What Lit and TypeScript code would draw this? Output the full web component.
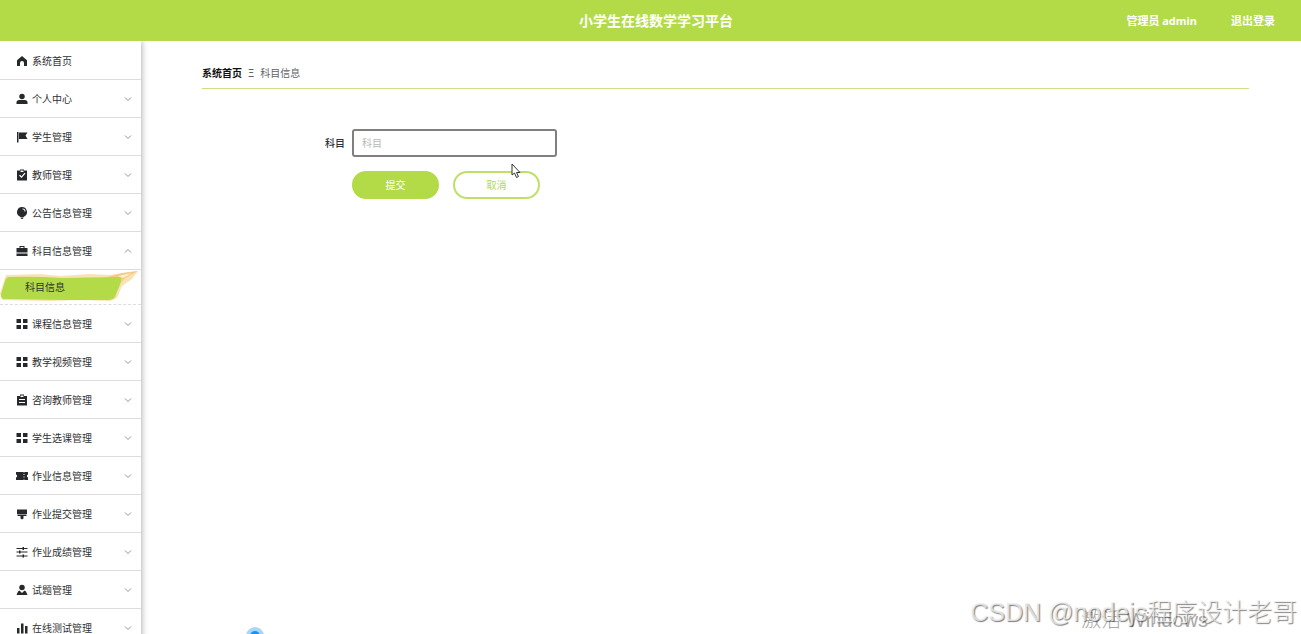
import { LitElement, html, css, svg, nothing } from 'lit';
import { customElement, property } from 'lit/decorators.js';

// Menu glyphs, drawn on a 24 x 24 grid.
const icons: Record<string, unknown> = {
  home: svg`<path d="M12 2 22 10.500V22h-6v-6a4 4 0 0 0-8 0v6H2V10.500z"/>`,
  user: svg`<circle cx="12" cy="7" r="5.500"/><path d="M1 22v-3c0-3 2-5 5-5h12c3 0 5 2 5 5v3z"/>`,
  flag: svg`<path d="M2 2h3v21H2zM6 3h17l-4 6 4 7H6z"/>`,
  claim: svg`<path fill-rule="evenodd" d="M2 3h6V1h8v2h6v20H2zM9 3v3h6V3zM6 13l5 5 8-9-2-1.500-6 7-3-3z"/>`,
  bulb: svg`<path fill-rule="evenodd" d="M12 0a10 10 0 0 1 6 18l-3 2H9l-3-2A10 10 0 0 1 12 0zm1 3v2c3 0 4 1 4 4h2c0-4-2-6-6-6zM9 21h6v1l-2 2h-2l-2-2z"/>`,
  bag: svg`<path fill-rule="evenodd" d="M7 6V2h10v4h6v9H1V6zm2 0h6V4H9zM1 17h22v5H1z"/>`,
  grid: svg`<path d="M1 2h9v8H1zM14 2h9v8h-9zM1 14h9v8H1zM14 14h9v8h-9z"/>`,
  order: svg`<path fill-rule="evenodd" d="M2 4h6V1h8v3h6v19H2zM9 3v3h6V3zM6 10v2h12v-2zM6 16v2h12v-2z"/>`,
  ticket: svg`<path fill-rule="evenodd" d="M0 4h15l1 2 1-2h7v5c-3 1-3 5 0 6v5h-7l-1-2-1 2H0v-5c3-1 3-5 0-6zm15 4v2h2V8zm0 5v2h2v-2z"/>`,
  brush: svg`<path d="M2 3h20v9H2zM3 13h18v3h-6v5l-3 2-3-2v-5H3z"/>`,
  sliders: svg`<path d="M1 4h12V2h3v2h7v2h-7v2h-3V6H1zM1 11h5V9h3v2h14v2H9v2H6v-2H1zM1 19h12v-2h3v2h7v2h-7v2h-3v-2H1z"/>`,
  custom: svg`<circle cx="12" cy="7" r="5.500"/><path d="M7 13l5 5 5-5 3 2 3 7H1l3-7z"/>`,
  data: svg`<path d="M2 12h5v11H2zM10 3h5v20h-5zM18 8h5v15h-5z"/>`,
};

interface MenuEntry {
  label: string;
  icon: string;
  children?: string[];
  leaf?: boolean;
}

const entries: MenuEntry[] = [
  { label: '系统首页', icon: 'home', leaf: true },
  { label: '个人中心', icon: 'user' },
  { label: '学生管理', icon: 'flag' },
  { label: '教师管理', icon: 'claim' },
  { label: '公告信息管理', icon: 'bulb' },
  { label: '科目信息管理', icon: 'bag', children: ['科目信息'] },
  { label: '课程信息管理', icon: 'grid' },
  { label: '教学视频管理', icon: 'grid' },
  { label: '咨询教师管理', icon: 'order' },
  { label: '学生选课管理', icon: 'grid' },
  { label: '作业信息管理', icon: 'ticket' },
  { label: '作业提交管理', icon: 'brush' },
  { label: '作业成绩管理', icon: 'sliders' },
  { label: '试题管理', icon: 'custom' },
  { label: '在线测试管理', icon: 'data' },
];

@customElement('side-menu')
export class SideMenu extends LitElement {
  @property({ attribute: false }) entries: MenuEntry[] = [];

  static styles = css`
    :host { display: block; background: #fff; box-shadow: 1px 0 6px rgba(0, 0, 0, 0.3); }
    ul { list-style: none; margin: 0; padding: 1px 0 0; }
    .row {
      display: flex; align-items: center; gap: 4px; box-sizing: border-box;
      width: 100%; height: 38px; padding: 0 8px 0 16px;
      border: 0; border-bottom: 1px solid #ddd; background: none;
      font: inherit; color: #303133; text-align: left; cursor: pointer;
    }
    .icon { width: 12px; height: 12px; fill: #26292c; flex: none; }
    .label { flex: 1; }
    .arrow { width: 10px; height: 10px; fill: none; stroke: #909399; flex: none; }
    .sub {
      display: grid; grid-template: 34px / 100%; align-items: center;
      border-bottom: 1px dashed #ddd; color: #303133; text-decoration: none;
    }
    .splash, .sublabel { grid-area: 1 / 1; }
    .splash { width: 100%; height: 34px; }
    .sublabel { padding-left: 25px; z-index: 1; }
  `;

  render() {
    return html`<nav><ul>${this.entries.map((e) => html`
      <li>
        <button class="row" type="button">
          <svg class="icon" viewBox="0 0 24 24" aria-hidden="true">${icons[e.icon]}</svg>
          <span class="label">${e.label}</span>
          ${e.leaf ? nothing : html`<svg class="arrow" viewBox="0 0 10 10" aria-hidden="true">
            <path d=${e.children ? 'M2 6.500 5 3.500 8 6.500' : 'M2 3.500 5 6.500 8 3.500'} /></svg>`}
        </button>
        ${e.children?.map((c) => html`<a class="sub" href="#">
          <svg class="splash" viewBox="0 0 141 34" preserveAspectRatio="none" aria-hidden="true">
            <path fill="#fbe2b5" d="M6 5 40 4 60 6 90 4 110 5 138 1 132 9 122 16 117 28 110 31 80 30 50 31 2 30 0 23z"/>
            <path fill="#f6c886" d="M104 8 122 3 138 1 125 8 120 14 123 9z"/>
            <path fill="#fff1cf" d="M118 6 132 3 123 8z"/>
            <path fill="#b3db47" d="M9 7Q35 6 62 8L118 7Q123 7 121 12L115 27Q113 30 108 30L65 30 5 29Q0 29 1 24L5 11Q6 7 9 7z"/>
          </svg>
          <span class="sublabel">${c}</span></a>`)}
      </li>`)}</ul></nav>`;
  }
}

@customElement('app-root')
export class AppRoot extends LitElement {
  static styles = css`
    :host {
      display: flex; flex-direction: column; position: relative;
      height: 100vh; overflow: hidden; background: #fff; color: #303133;
      font: 10px/16px "Noto Sans", "Noto Sans CJK SC", sans-serif;
    }
    .top {
      display: grid; grid-template-columns: 1fr auto 1fr; align-items: center;
      flex: none; height: 41px; padding: 0 26px 0 37px;
      background: #b3db47; color: #fff; font-weight: 700;
    }
    .title { grid-column: 2; margin: 0; font-size: 14px; line-height: 20px; }
    .account { display: flex; justify-content: flex-end; gap: 34px; font-size: 11px; }
    .account a { color: inherit; text-decoration: none; }
    .body { display: flex; flex: 1; min-height: 0; overflow: hidden; }
    side-menu { flex: none; width: 141px; align-self: flex-start; }
    main { flex: 1; padding: 24px 52px 0 61px; }
    .crumbs {
      display: flex; gap: 6px; padding-bottom: 7px;
      border-bottom: 1px solid #d0dc86; color: #606266;
    }
    .crumbs a { color: #111; font-weight: 700; text-decoration: none; }
    form {
      display: grid; grid-template-columns: 143px auto; column-gap: 7px; row-gap: 14px;
      justify-content: start; align-items: center; padding-top: 40px;
    }
    label { text-align: right; font-weight: 500; }
    input {
      box-sizing: border-box; width: 205px; height: 28px; padding: 0 8px;
      border: 2px solid #808080; border-radius: 3px; font: inherit; color: inherit; background: #fff;
    }
    input::placeholder { color: #b8b8b8; opacity: 1; }
    .actions { grid-column: 2; display: flex; gap: 14px; }
    .btn {
      box-sizing: border-box; width: 87px; height: 28px; padding: 0;
      border: 2px solid #b3db47; border-radius: 14px; font: inherit; cursor: pointer;
    }
    .primary { background: #b3db47; color: #fff; }
    .plain { background: #fff; border-color: #bfe066; color: #b3db47; }
    .cursor { position: absolute; left: 511px; top: 163px; width: 10px; height: 16px; }
    .bubble {
      position: absolute; left: 246px; top: 627px; box-sizing: border-box;
      width: 18px; height: 18px; border: 4px solid #a9d6fb; border-radius: 50%; background: #1890ff;
    }
    .mark, .activate {
      position: absolute; white-space: nowrap; pointer-events: none; font-weight: 300;
      font-family: "Liberation Sans", "Noto Sans CJK SC", sans-serif;
    }
    .mark {
      right: 4px; bottom: 5px; font-size: 25px; line-height: 34px;
      color: rgba(240, 240, 240, 0.8); text-shadow: 1px 1px 1px rgba(0, 0, 0, 0.5);
    }
    .activate { right: 93px; bottom: 0; font-size: 20px; line-height: 28px; color: #a8a8a8; }
  `;

  render() {
    return html`
      <header class="top">
        <h1 class="title">小学生在线数学学习平台</h1>
        <div class="account"><span>管理员 admin</span><a href="#">退出登录</a></div>
      </header>
      <div class="body">
        <side-menu .entries=${entries}></side-menu>
        <main>
          <nav class="crumbs"><a href="#">系统首页</a><span>Ξ</span><span>科目信息</span></nav>
          <form @submit=${(e: Event) => e.preventDefault()}>
            <label for="subject">科目</label>
            <input id="subject" type="text" placeholder="科目" />
            <div class="actions">
              <button class="btn primary" type="submit">提交</button>
              <button class="btn plain" type="button">取消</button>
            </div>
          </form>
        </main>
      </div>
      <svg class="cursor" viewBox="0 0 10 16" aria-hidden="true">
        <path d="M1 1v11l2.500-2 2 4.500 2-1-2-4H9z" fill="#fff" stroke="#333" stroke-width="1"/>
      </svg>
      <div class="bubble"></div>
      <div class="activate">激活 Windows</div>
      <div class="mark">CSDN @nodejs程序设计老哥</div>
    `;
  }
}
